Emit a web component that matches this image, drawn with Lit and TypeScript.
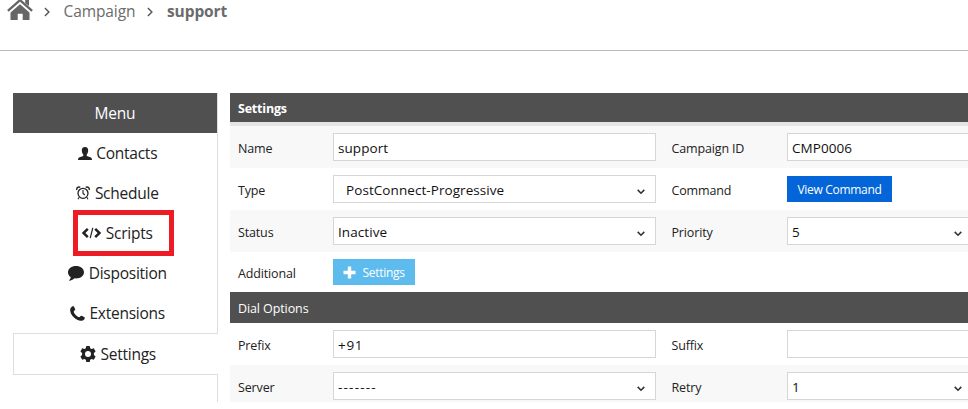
import { LitElement, html, svg, css, nothing } from "lit";
import { customElement, property } from "lit/decorators.js";

const icons: Record<string, unknown> = {
  user: svg`<svg width="14" height="13" viewBox="0 0 14 13"><path d="M7 0C9.300 0 10.300 1.600 10.200 3.800C10.100 5.600 9.300 6.900 8.700 7.700V8.900L12.500 10.200C13.600 10.700 14 11.400 14 13H0C0 11.400 .4 10.700 1.500 10.200L5.300 8.900V7.700C4.700 6.900 3.900 5.600 3.800 3.800C3.700 1.600 4.700 0 7 0Z"/></svg>`,
  clock: svg`<svg width="14" height="14" viewBox="0 0 14 14" fill="none" stroke="currentColor"><circle cx="7" cy="7.300" r="5" stroke-width="1.300"/><path d="M7 4V7.500L8.800 9M3.200 11.300L2 13.200M10.800 11.300L12 13.200" stroke-width="1.100"/><path d="M.8 4C.3 1.500 2.500.3 4.300 1.300M13.200 4C13.700 1.500 11.500.3 9.700 1.300" stroke-width="1.400"/></svg>`,
  code: svg`<svg width="19" height="12" viewBox="0 0 19 12" fill="none" stroke="currentColor"><path d="M5.800 1.800L1.500 6L5.800 10.200M13.200 1.800L17.500 6L13.200 10.200" stroke-width="2.500"/><path d="M10.800.8L8.200 11.200" stroke-width="1.200"/></svg>`,
  comment: svg`<svg width="16" height="15" viewBox="0 0 16 15"><path d="M8 0C12.500 0 16 2.700 16 6.200S12.500 12.400 8 12.400L6.500 12.300C5 13.900 3 14.800 1 14.800C.8 14.600 1 14.300 1.400 14C2.200 13.300 2.600 12.400 2.700 11.100C1 10 0 8.200 0 6.200C0 2.700 3.500 0 8 0Z"/></svg>`,
  phone: svg`<svg width="15" height="15" viewBox="0 0 15 15"><path d="M.5 2.200C1.200 1 2.400.2 3.300 0C3.900.1 5 2.600 5.300 3.600C5.300 4.500 3.600 5 3.700 5.900C4.500 8 7 10.600 9 11.300C9.900 11.400 10.500 9.700 11.400 9.700C12.400 10 14.800 11.100 14.900 11.700C14.700 12.900 13.900 14 12.800 14.500C9.800 15.600 6.500 13.900 3.800 11.200C1.100 8.500-.6 5.200.5 2.200Z"/></svg>`,
  gear: svg`<svg width="16" height="16" viewBox="0 0 16 16"><path fill-rule="evenodd" d="M6.300 0H9.700L10.200 2.300L11.600 3.100L13.800 2.300L15.600 5.400L13.900 6.900V9.100L15.600 10.600L13.800 13.700L11.600 12.900L10.200 13.700L9.700 16H6.300L5.800 13.700L4.400 12.900L2.200 13.700L.4 10.600L2.100 9.100V6.900L.4 5.400L2.200 2.300L4.400 3.100L5.800 2.300ZM8 5A3 3 0 1 0 8 11A3 3 0 1 0 8 5Z"/></svg>`,
};

const chevron = svg`<svg class="chevron" width="8" height="6" viewBox="0 0 8 6"><path d="M.7.900L4 4.200L7.300.900" fill="none" stroke="#333" stroke-width="1.600"/></svg>`;
const arrow = svg`<svg class="arrow" width="6" height="10" viewBox="0 0 6 10"><path d="M.9.900L4.900 5L.9 9.100" fill="none" stroke="#555" stroke-width="1.400"/></svg>`;

@customElement("menu-item")
export class MenuItem extends LitElement {
  @property() icon = "";
  @property() label = "";
  @property({ type: Boolean, reflect: true }) active = false;
  @property({ type: Boolean }) marked = false;
  static styles = css`
    :host { display: flex; height: 40px; box-sizing: border-box; padding-left: 5px; align-items: center; justify-content: center;
      position: relative; border-right: 1px solid #ddd; color: #222; font-size: 15.5px; letter-spacing: -0.25px; }
    :host([active]) { height: 42px; border: 1px solid #ddd; border-right: 0; padding-left: 4px; }
    .icon { display: flex; margin-right: 4.5px; }
    svg { display: block; fill: currentColor; }
    svg[fill="none"] { fill: none; }
    .mark { position: absolute; left: 60px; top: -3px; width: 101px; height: 46px; box-sizing: border-box; border: 5px solid #ed1c24; }
  `;
  render() {
    return html`<span class="icon">${icons[this.icon]}</span><span>${this.label}</span>
      ${this.marked ? html`<div class="mark"></div>` : nothing}`;
  }
}

@customElement("form-field")
export class FormField extends LitElement {
  @property() label = "";
  @property() value = "";
  @property() kind = "text";
  static styles = css`
    :host { display: flex; }
    .label { width: 95px; flex: none; padding-top: 13px; line-height: 20px; font-size: 12.500px; letter-spacing: -0.15px; color: #222; }
    .label.raised { padding-top: 12px; }
    :host(.second) .label { width: 115.500px; }
    .box { margin-top: 7px; flex: 1; height: 28px; box-sizing: border-box; border: 1px solid #d6d6d6; background: #fff; color: #111;
      display: flex; align-items: center; justify-content: space-between; padding: 0 10px 0 4px; font-size: 13.500px; letter-spacing: 0.07px; white-space: pre; }
    .value { line-height: 26px; padding-top: 2px; }
    .indent { padding-left: 8px; }
    .dashes { letter-spacing: 1.200px; }
    .wide { letter-spacing: 0.700px; }
    .chevron { margin-top: 5px; }
    .button { margin-top: 8px; height: 26px; display: flex; align-items: center; color: #fff; font-size: 12px; letter-spacing: -0.300px; box-sizing: border-box; }
    .primary { width: 105px; justify-content: center; background: #0465d9; }
    .info { width: 82px; margin-top: 7px; padding-left: 10px; gap: 6.500px; background: #5ebbed; }
  `;
  render() {
    const dropdown = this.kind.startsWith("select");
    const shape = this.kind === "select-indent" ? "indent" : this.value.startsWith("--") ? "dashes" : this.value.startsWith("+") ? "wide" : "";
    return html`<div class="label ${this.kind === "info" ? "raised" : ""}">${this.label}</div>
      ${this.kind === "primary"
        ? html`<div class="button primary">${this.value}</div>`
        : this.kind === "info"
          ? html`<div class="button info"><svg width="13" height="13" viewBox="0 0 13 13"><path d="M6.500 .5V12.500M.5 6.500H12.500" stroke="#fff" stroke-width="3.400"/></svg><span>${this.value}</span></div>`
          : html`<div class="box"><span class="value ${shape}">${this.value}</span>${dropdown ? chevron : nothing}</div>`}`;
  }
}

@customElement("app-root")
export class AppRoot extends LitElement {
  static styles = css`
    :host { display: block; height: 409px; overflow: hidden; background: #fff; font-family: "Open Sans", "Noto Sans", sans-serif; }
    .crumbs { height: 50px; border-bottom: 1px solid #bbb; display: flex; align-items: flex-start; color: #6b6b6b; font-size: 15.500px; line-height: 22px; }
    .home { display: block; margin-left: 7px; }
    .arrow { margin: 5px 0 0; }
    .a1 { margin-left: 11px; width: 19.500px; }
    .a2 { margin-left: 12px; width: 20px; }
    .crumb { letter-spacing: -0.1px; width: 71.500px; }
    .current { font-weight: 700; letter-spacing: -0.100px; }
    .layout { display: flex; gap: 12px; margin: 42px 0 0 13px; height: 309px; overflow: hidden; }
    .menu { width: 205px; flex: none; display: flex; flex-direction: column; }
    .menu-title { height: 40px; line-height: 41px; background: #505050; color: #fff; text-align: center; font-size: 15.500px; border-right: 1px solid #ddd; letter-spacing: -0.2px; }
    .rest { flex: 1; border-right: 1px solid #ddd; }
    .main { flex: 1; min-width: 0; overflow: hidden; }
    .bar { background: #505050; color: #fff; padding-left: 8px; font-size: 12.500px; height: 31px; line-height: 33px; letter-spacing: -0.1px; }
    .bar.top { height: 29px; line-height: 32px; font-weight: 700; border-bottom: 4px solid #e4e4e4; letter-spacing: -0.200px; }
    .row { height: 42px; width: 742px; display: grid; grid-template-columns: 418px 301px; column-gap: 15.500px; padding-left: 8px; box-sizing: border-box; }
    .row.shade { background: #f8f8f8; }
    .row.short { height: 40px; }
  `;
  render() {
    return html`
      <div class="crumbs">
        <svg class="home" width="26" height="21" viewBox="0 0 26 21"><path fill="#666" d="M3.500 12.500L13 4.200L22.500 12.500V20H15.700V13.800H10.700V20H3.500Z"/><path fill="none" stroke="#666" stroke-width="2.400" d="M.9 10.800L13 .2L25.100 10.800"/><path fill="#666" d="M18.200-1H22V6L18.200 3Z"/></svg>
        <span class="a1">${arrow}</span><span class="crumb">Campaign</span>
        <span class="a2">${arrow}</span><span class="current">support</span>
      </div>
      <div class="layout">
        <nav class="menu">
          <div class="menu-title">Menu</div>
          <menu-item icon="user" label="Contacts"></menu-item>
          <menu-item icon="clock" label="Schedule"></menu-item>
          <menu-item icon="code" label="Scripts" marked></menu-item>
          <menu-item icon="comment" label="Disposition"></menu-item>
          <menu-item icon="phone" label="Extensions"></menu-item>
          <menu-item icon="gear" label="Settings" active></menu-item>
          <div class="rest"></div>
        </nav>
        <main class="main">
          <div class="bar top">Settings</div>
          <div class="row shade">
            <form-field label="Name" value="support"></form-field>
            <form-field class="second" label="Campaign ID" value="CMP0006"></form-field>
          </div>
          <div class="row">
            <form-field label="Type" value="PostConnect-Progressive" kind="select-indent"></form-field>
            <form-field class="second" label="Command" value="View Command" kind="primary"></form-field>
          </div>
          <div class="row shade">
            <form-field label="Status" value="Inactive" kind="select"></form-field>
            <form-field class="second" label="Priority" value="5" kind="select"></form-field>
          </div>
          <div class="row short">
            <form-field label="Additional" value="Settings" kind="info"></form-field>
          </div>
          <div class="bar">Dial Options</div>
          <div class="row">
            <form-field label="Prefix" value="+91"></form-field>
            <form-field class="second" label="Suffix"></form-field>
          </div>
          <div class="row shade">
            <form-field label="Server" value="-------" kind="select"></form-field>
            <form-field class="second" label="Retry" value="1" kind="select"></form-field>
          </div>
        </main>
      </div>
    `;
  }
}
